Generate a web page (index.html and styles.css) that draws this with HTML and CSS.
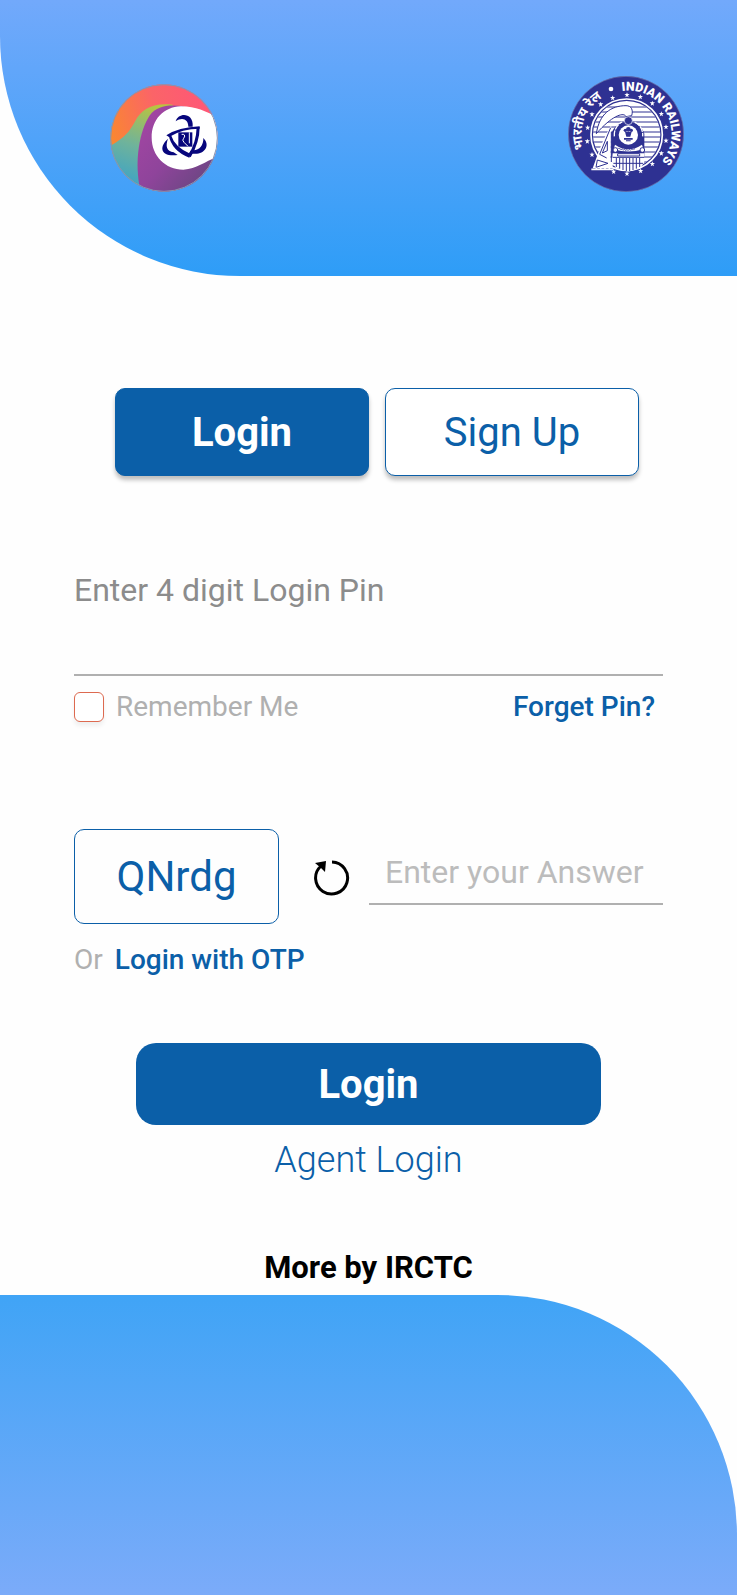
FILE: index.html
```html
<!DOCTYPE html>
<html lang="en">
<head>
<meta charset="utf-8">
<meta name="viewport" content="width=device-width, initial-scale=1">
<title>IRCTC Login</title>
<link rel="stylesheet" href="styles.css">
</head>
<body>
<header class="hero">
  <svg class="logo-irctc" viewBox="30 29 324 324" role="img" aria-label="IRCTC">
    <defs>
      <linearGradient id="warm" x1="0" y1=".6" x2="1" y2=".3"><stop offset="0" stop-color="#f98a2c"/><stop offset=".5" stop-color="#fb6468"/><stop offset="1" stop-color="#ff5578"/></linearGradient>
      <linearGradient id="green" x1=".6" y1="0" x2=".3" y2="1"><stop offset="0" stop-color="#b9c43f"/><stop offset=".5" stop-color="#6fb39b"/><stop offset="1" stop-color="#36a1cc"/></linearGradient>
      <linearGradient id="purple" x1="0" y1="0" x2="1" y2="1"><stop offset="0" stop-color="#a746a4"/><stop offset=".5" stop-color="#8f449b"/><stop offset="1" stop-color="#5d4778"/></linearGradient>
      <clipPath id="disc"><circle cx="192" cy="191" r="161"/></clipPath>
    </defs>
    <g clip-path="url(#disc)">
      <path fill="url(#warm)" d="M30 29h324v324H30z"/>
      <path fill="url(#green)" d="M30 215C75 190 88 172 106 140C122 108 155 84 218 91L240 220L140 353H30z"/>
      <path fill="url(#purple)" d="M122 353C100 260 120 165 150 122C172 94 205 90 250 96L354 240V353z"/>
      <path fill="#fff" d="M354 128C315 112 290 96 243 96C190 98 155 136 155 190C155 244 196 286 250 286C292 284 310 262 354 248z"/>
    </g>
    <circle cx="192" cy="191" r="160" fill="none" stroke="#8396b3" stroke-width="3"/>
    <g fill="#07067c">
      <path d="M227 141C236 112 282 116 278 157H265C265 134 246 127 227 141z"/>
      <path d="M310 191C337 218 304 249 268 235L274 227C296 231 311 214 310 191z"/>
      <path d="M204 193C176 217 181 249 233 242L221 234C199 231 196 214 204 193z"/>
      <path d="M199 183Q235 159 299 156V163Q246 163 207 188z"/>
      <path d="M290 158H299Q299 204 272 249L264 243Q289 205 290 158z"/>
      <path d="M206 182H213Q224 219 272 239L268 250Q215 230 206 182z"/>
      <path d="M235 174h42v43h-42z"/>
    </g>
    <path d="M245 180H251Q258 184 251 192Q245 197 252 204L264 216M268 174V207" fill="none" stroke="#fff" stroke-width="3"/>
  </svg>
  <svg class="logo-rail" viewBox="21 17 348 348" role="img" aria-label="Indian Railways">
    <defs>
      <path id="arcRight" d="M183 62A130 130 0 0 1 290 286"/>
      <path id="arcLeft" d="M69 236A130 130 0 0 1 145 72"/>
      <path id="star" d="M0-8L2-3L8-3L3 1L5 7L0 4L-5 7L-3 1L-8-3L-2-3z"/>
      <clipPath id="inner"><circle cx="197" cy="193" r="101"/></clipPath>
    </defs>
    <circle cx="195" cy="191" r="173" fill="#2e3192" stroke="#6f78aa" stroke-width="2"/>
    <circle cx="150" cy="56" r="7" fill="#fff"/>
    <text class="rail-name"><textPath href="#arcRight">INDIAN RAILWAYS</textPath></text>
    <text class="rail-hindi"><textPath href="#arcLeft">भारतीय रेल</textPath></text>
    <g fill="#fff">
      <use href="#star" x="198" y="74"/><use href="#star" x="238" y="80"/><use href="#star" x="274" y="99"/><use href="#star" x="301" y="131"/><use href="#star" x="315" y="170"/><use href="#star" x="315" y="211"/><use href="#star" x="301" y="249"/><use href="#star" x="274" y="281"/><use href="#star" x="239" y="302"/><use href="#star" x="198" y="310"/><use href="#star" x="158" y="304"/><use href="#star" x="155" y="83"/><use href="#star" x="119" y="102"/><use href="#star" x="93" y="132"/><use href="#star" x="80" y="172"/><use href="#star" x="79" y="213"/><use href="#star" x="93" y="253"/>
    </g>
    <circle cx="197" cy="193" r="107" fill="none" stroke="#fff" stroke-width="5"/>
    <circle cx="197" cy="193" r="101" fill="#fff"/>
    <path clip-path="url(#inner)" d="M90 110H310M90 125H310M90 140H310M90 155H310M90 170H310M90 185H310M90 200H310M90 215H310M90 230H310M90 245H310M90 260H310M90 275H310" stroke="#2e3192" stroke-width="3"/>
    <path d="M106 190C115 130 150 106 195 106C212 106 217 120 212 136L195 139C190 125 155 133 106 190z" fill="#fff" stroke="#2e3192" stroke-width="3"/>
    <path d="M151 190A52 52 0 0 1 250 190V260H151z" fill="#2e3192"/>
    <circle cx="202" cy="151" r="12" fill="#2e3192" stroke="#fff" stroke-width="2"/>
    <path d="M160 198A43 43 0 0 1 183 155M221 155A43 43 0 0 1 245 198" fill="none" stroke="#fff" stroke-width="4" stroke-dasharray="18 3"/>
    <circle cx="202" cy="194" r="29" fill="#fff"/>
    <g fill="#2e3192"><circle cx="202" cy="177" r="7"/><circle cx="193" cy="180" r="5"/><circle cx="211" cy="180" r="5"/><path d="M192 184H212L208 199H196zM189 203h26v5h-26zM195 210h14v3h-14z"/></g>
    <path d="M162 223Q202 250 243 223L247 237Q202 250 158 237z" fill="#fff"/>
    <path d="M171 232l3 4l3-2l3 5l4-4l3 5l4-4l3 5l4-4l3 4l4-4l3 3l4-4l3 3l4-4l3 2" fill="none" stroke="#2e3192" stroke-width="2"/>
    <path d="M155 249H250V275L239 292L202 304L164 292L153 275z" fill="#fff"/>
    <path d="M155 261H250M157 279H246M166 263V290M176 263V295M186 263V299M196 263V302M206 263V302M216 263V299M226 263V295M236 263V290M170 250H236V257H170z" fill="none" stroke="#2e3192" stroke-width="3"/>
    <g fill="#fff" stroke="#2e3192" stroke-width="3"><circle cx="163" cy="239" r="7"/><circle cx="244" cy="239" r="7"/></g>
    <path d="M151 164C125 207 113 244 95 294H155V272L148 268z" fill="#fff"/>
    <path d="M149 172L116 252L137 263M139 213L124 248L139 241zM109 269L141 279L105 291zM151 185V275" fill="none" stroke="#2e3192" stroke-width="3"/>
    <path d="M91 297H157M106 292v8M119 292v8M132 292v8M145 292v8" stroke="#fff" stroke-width="5"/>
  </svg>
</header>
<main class="content">
  <nav class="tabs" aria-label="Account">
    <button class="tab tab-active" type="button">Login</button>
    <button class="tab" type="button">Sign Up</button>
  </nav>
  <form class="form">
    <label class="pin-label" for="pin">Enter 4 digit Login Pin</label>
    <input class="pin" id="pin" type="password" inputmode="numeric" maxlength="4">
    <div class="options">
      <label class="remember"><input class="check" type="checkbox">Remember Me</label>
      <a class="link" href="#forgot">Forget Pin?</a>
    </div>
    <div class="captcha">
      <div class="code">QNrdg</div>
      <button class="reload" type="button" aria-label="Refresh code">
        <svg viewBox="0 0 38 38" width="38" height="38" aria-hidden="true"><path d="M19 4A16 16 0 1 1 8 8" fill="none" stroke="#000" stroke-width="3"/><path d="M2 5L13 3L12 14L8 10z"/></svg>
      </button>
      <input class="answer" type="text" aria-label="Answer" placeholder="Enter your Answer">
    </div>
    <p class="alt"><span>Or</span><a class="link" href="#otp">Login with OTP</a></p>
    <button class="submit" type="submit">Login</button>
  </form>
  <a class="agent" href="#agent">Agent Login</a>
  <h2 class="more">More by IRCTC</h2>
</main>
<footer class="base"></footer>
</body>
</html>
```
FILE: styles.css
```css
* { box-sizing: border-box; }
body {
  margin: 0;
  min-height: 100vh;
  display: flex;
  flex-direction: column;
  background: #fefefe;
  font-family: Roboto, "Noto Sans", sans-serif;
  color: #0b5fa8;
}
a { color: inherit; text-decoration: none; }
button, input { font: inherit; color: inherit; }
button { cursor: pointer; }

.hero {
  display: flex;
  justify-content: space-between;
  align-items: flex-end;
  padding: 76px 53px 84px 110px;
  border-bottom-left-radius: 240px;
  background: linear-gradient(#72a9fb, #2e9df7);
}
.logo-irctc { width: 108px; height: 108px; }
.logo-rail { width: 116px; height: 116px; }
.rail-name { font: 900 37px Roboto, sans-serif; fill: #fff; }
.rail-hindi { font: 700 39px "Noto Sans Devanagari", "Noto Sans", sans-serif; fill: #fff; }

.content {
  display: flex;
  flex-direction: column;
  padding: 112px 74px 7px;
}
.tabs {
  display: grid;
  grid-template-columns: 1fr 1fr;
  gap: 16px;
  margin: 0 24px 94px 41px;
}
.tab {
  height: 88px;
  border: 1px solid #0b5fa8;
  border-radius: 10px;
  background: #fff;
  font-size: 40px;
  box-shadow: 0 4px 4px rgba(0, 0, 0, .25);
}
.tab-active { background: #0b5fa8; color: #fff; font-weight: 700; }

.form { display: flex; flex-direction: column; }
.pin-label { font-size: 32px; line-height: 40px; color: #8c8c8c; }
.pin, .answer {
  border: 0;
  border-bottom: 2px solid #b0b0b0;
  border-radius: 0;
  background: none;
  outline: 0;
}
.pin { height: 66px; font-size: 32px; }
.options {
  display: flex;
  justify-content: space-between;
  align-items: center;
  margin-top: 15px;
  padding-right: 8px;
  font-size: 28px;
  line-height: 32px;
}
.remember { display: flex; align-items: center; gap: 12px; color: #b0b0b0; }
.check {
  appearance: none;
  width: 30px;
  height: 30px;
  margin: 0;
  border: 1px solid #dd6a50;
  border-radius: 6px;
  background: #fff;
  box-shadow: 0 4px 4px rgba(0, 0, 0, .06);
}
.check:checked { background: #dd6a50; }
.link { font-weight: 500; }
.captcha {
  display: flex;
  align-items: center;
  margin-top: 106px;
}
.code {
  width: 205px;
  padding: 22px 0;
  border: 1px solid #0b5fa8;
  border-radius: 10px;
  font-size: 42px;
  line-height: 49px;
  text-align: center;
}
.reload {
  display: flex;
  margin: 0 18px 0 34px;
  padding: 0;
  border: 0;
  background: none;
}
.answer {
  flex: 1;
  min-width: 0;
  height: 57px;
  padding: 0 16px 8px;
  font-size: 32px;
}
.answer::placeholder { color: #bcbcbc; opacity: 1; }
.alt {
  display: flex;
  gap: 12px;
  margin: 20px 0 67px;
  font-size: 28px;
  line-height: 32px;
}
.alt span { color: #b0b0b0; }
.submit {
  height: 82px;
  margin: 0 62px;
  border: 0;
  border-radius: 20px;
  background: #0b5fa8;
  color: #fff;
  font-size: 40px;
  font-weight: 700;
}
.agent {
  align-self: center;
  margin-top: 15px;
  font-size: 36px;
  font-weight: 300;
  line-height: 40px;
}
.more {
  margin: 68px 0 0;
  color: #000;
  font-size: 31px;
  font-weight: 700;
  line-height: 40px;
  text-align: center;
}
.base {
  flex: 1;
  min-height: 300px;
  border-top-right-radius: 240px;
  background: linear-gradient(#40a4f6, #7babf9);
}
```
